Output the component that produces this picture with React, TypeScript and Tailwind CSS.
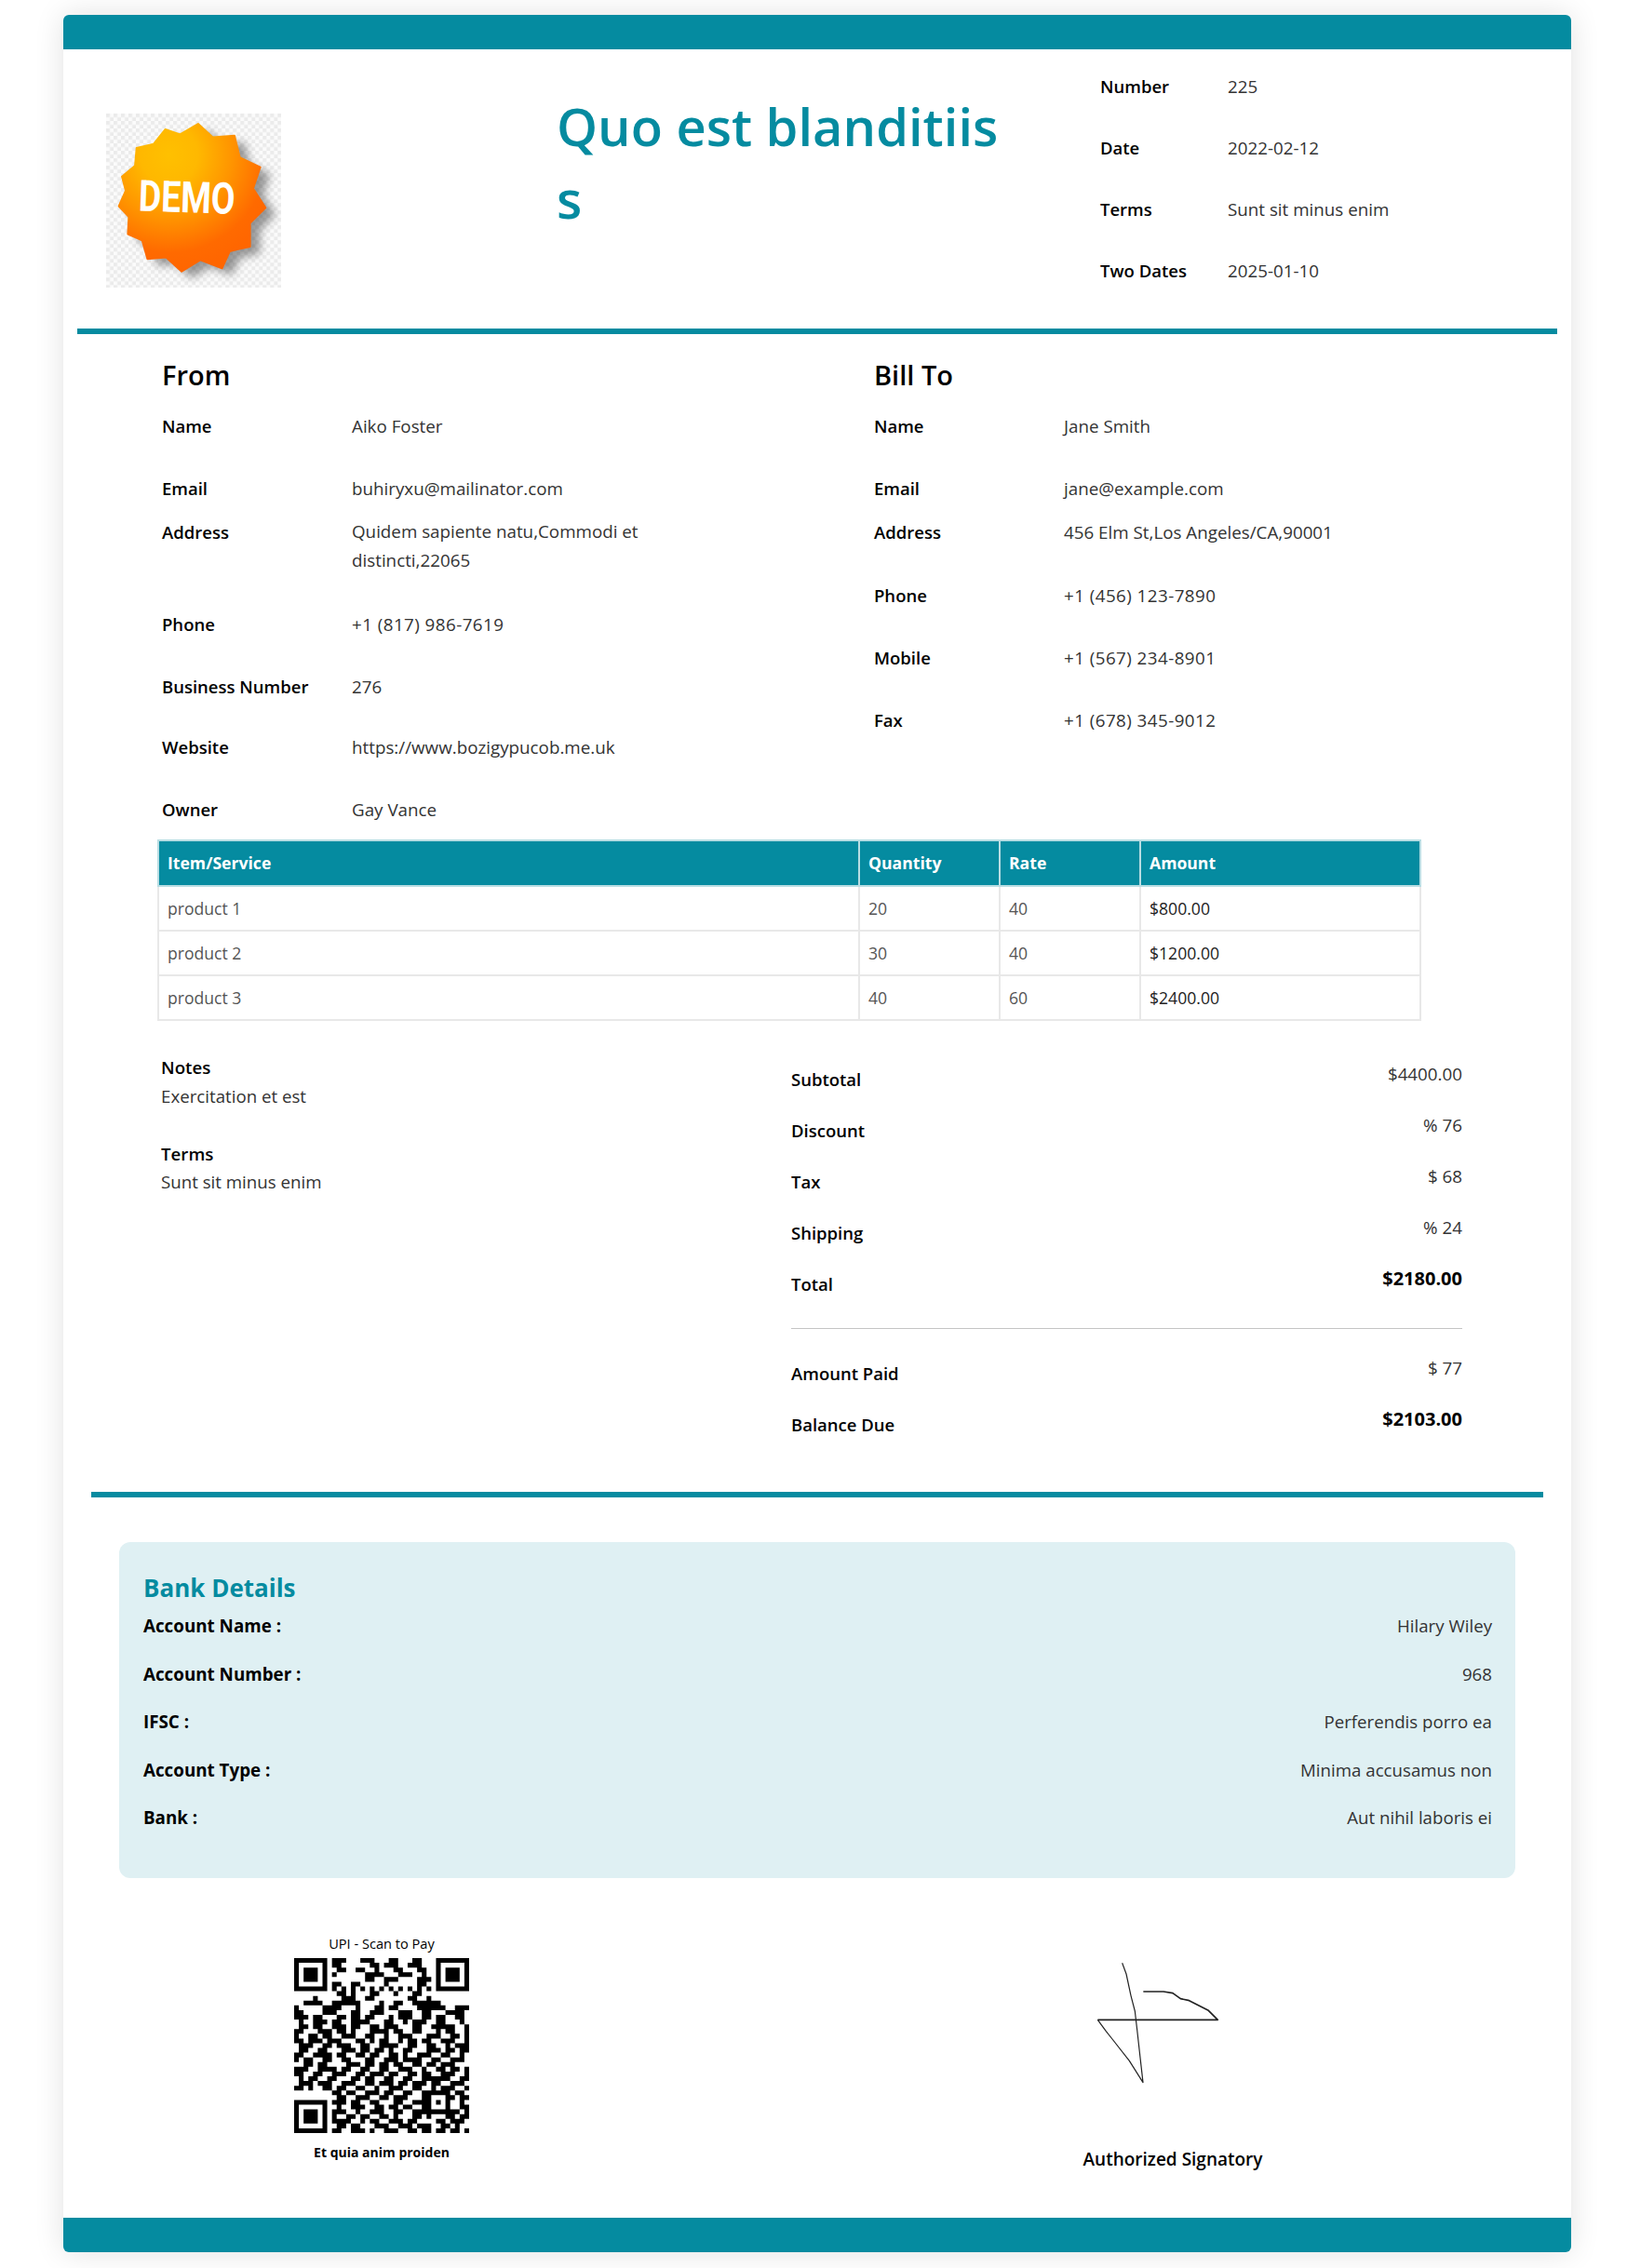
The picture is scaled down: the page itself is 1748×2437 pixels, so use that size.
import React from "react";

const QR_ROWS = [
  "1111111011100011100011000110011111111",
  "1000001011000000110111001110001000001",
  "1000001001100110010001100011011011101",
  "1011101010000001111000111001001011101",
  "1011101000000001100111000011111011101",
  "1000001011001100000100000011001000001",
  "1111111010101010101010101010101111111",
  "0000000001101000110001000110000000000",
  "0000100000111001100000001100100000000",
  "0011110011111100001001100111111000000",
  "1000001111000100011011000011111100111",
  "1100001110001100111000111001100011110",
  "1110110001101101100010111001101100110",
  "0100111011001111000110010111001100010",
  "0110110011101100110111000110011111001",
  "1100011101101000111101100110001011001",
  "1001101100111001100100111000111001101",
  "1101110111000110101100101101100111001",
  "0111001101110011001111001100110010111",
  "0110011000111011011010011000111011011",
  "1100111101100110110011010011100110010",
  "1011001100110001100111011110011001110",
  "0011011000011101101101100110110111000",
  "1110011110110011001100111001001101101",
  "1100110011100110111011001101100111001",
  "0101100110001101100110011001111110011",
  "0111011100111001101110110111011001110",
  "1101001101100110010011100110010111001",
  "0000000011011001110110011001111110110",
  "0000000001100111001101110001000111011",
  "0000000011101100110001100111010110010",
  "0000000001001110011011011001000110011",
  "0000000011100100111001100111111101101",
  "0000000010011011001101000110100011011",
  "0000000011110010110011101100001101110",
  "0000000001101100011100111011100110100",
  "0000000011001110100111001101101101101",
];

function qrCells() {
  const n = 37;
  const g = QR_ROWS.map((r) => r.padEnd(n, "0").slice(0, n).split("").map((c) => c === "1"));
  const finder = (ox: number, oy: number) => {
    for (let y = -1; y <= 7; y++)
      for (let x = -1; x <= 7; x++) {
        const px = ox + x, py = oy + y;
        if (px < 0 || py < 0 || px >= n || py >= n) continue;
        const ring = x === 0 || x === 6 || y === 0 || y === 6;
        const core = x >= 2 && x <= 4 && y >= 2 && y <= 4;
        g[py][px] = x >= 0 && x <= 6 && y >= 0 && y <= 6 && (ring || core);
      }
  };
  finder(0, 0);
  finder(30, 0);
  finder(0, 30);
  for (let y = 0; y < 5; y++)
    for (let x = 0; x < 5; x++) {
      g[28 + y][28 + x] = x === 0 || x === 4 || y === 0 || y === 4 || (x === 2 && y === 2);
    }
  const cells: [number, number][] = [];
  g.forEach((r, y) => r.forEach((v, x) => { if (v) cells.push([x, y]); }));
  return cells;
}

function QrCode() {
  return (
    <svg width="188" height="188" viewBox="0 0 37 37" className="block">
      <path d={qrCells().map(([x, y]) => `M${x} ${y}h1v1h-1z`).join("")} fill="#000" />
    </svg>
  );
}

function DemoLogo() {
  const star = "232,88 280,104 338,70 385,113 455,108 472,178 538,210 515,278 555,340 505,390 505,465 440,480 415,535 345,508 285,545 235,500 175,505 158,445 112,425 115,370 83,335 105,285 93,240 135,205 140,148 195,135";
  return (
    <svg width="188" height="187" viewBox="42 37 563 560" className="block">
      <defs>
        <pattern id="chk" width="24" height="24" patternUnits="userSpaceOnUse" x="42" y="37">
          <rect width="24" height="24" fill="#fbfbfb" />
          <rect width="12" height="12" fill="#ebebeb" />
          <rect x="12" y="12" width="12" height="12" fill="#ebebeb" />
        </pattern>
        <radialGradient id="orng" gradientUnits="userSpaceOnUse" cx="245" cy="170" r="370">
          <stop offset="0" stopColor="#ffc000" />
          <stop offset="0.25" stopColor="#ffb800" />
          <stop offset="0.55" stopColor="#ff9400" />
          <stop offset="0.85" stopColor="#ff6a00" />
          <stop offset="1" stopColor="#ff6600" />
        </radialGradient>
        <filter id="shd" x="-20%" y="-20%" width="140%" height="140%">
          <feGaussianBlur stdDeviation="15" />
        </filter>
      </defs>
      <rect x="42" y="37" width="563" height="560" fill="url(#chk)" />
      <polygon points={star} fill="#000" opacity="0.38" filter="url(#shd)" transform="translate(32 22)" />
      <polygon points={star} fill="url(#orng)" stroke="url(#orng)" strokeWidth="6" strokeLinejoin="round" />
      <text
        x="147"
        y="355"
        transform="rotate(2 300 308)"
        textLength="310"
        lengthAdjust="spacingAndGlyphs"
        fontFamily="Roboto, sans-serif"
        fontWeight="700"
        fontSize="140"
        fill="#fff"
      >
        DEMO
      </text>
    </svg>
  );
}

function Signature() {
  return (
    <svg width="140" height="140" viewBox="165 75 420 420" className="block">
      <path
        d="M257 85 L270 120 L285 190 L298 240 L305 300 L315 390 L324 470 L280 400 L225 330 L205 305 L178 268"
        fill="none"
        stroke="#222"
        strokeWidth="3.6"
        strokeLinejoin="round"
      />
      <path
        d="M178 268 L565 268 L535 238 L470 205 L445 200 L420 182 L390 177 L325 177"
        fill="none"
        stroke="#222"
        strokeWidth="5"
        strokeLinejoin="round"
      />
    </svg>
  );
}

function MetaRow({ k, v }: { k: string; v: string }) {
  return (
    <div className="flex h-[66px] items-center">
      <div className="w-[137px] text-[18.5px] font-semibold text-black">{k}</div>
      <div className="text-[18.8px] text-[#333]">{v}</div>
    </div>
  );
}

function PartyRow({ k, children, h }: { k: string; children: React.ReactNode; h: string }) {
  return (
    <div className={`flex leading-[24px] ${h}`}>
      <div className="w-[204px] shrink-0 text-[18.5px] font-semibold text-black">{k}</div>
      <div className="text-[18.8px] text-[#333]">{children}</div>
    </div>
  );
}

function Phone({ children }: { children: React.ReactNode }) {
  return <span className="tracking-[0.45px]">{children}</span>;
}

function TotalRow({ k, v, bold }: { k: string; v: string; bold?: boolean }) {
  return (
    <div className="flex h-[55px] justify-between leading-[24px]">
      <div className="pt-[6px] text-[18.5px] font-semibold text-black">{k}</div>
      <div className={bold ? "text-[20px] font-bold text-black" : "text-[18.8px] text-[#333]"}>{v}</div>
    </div>
  );
}

function BankRow({ k, v }: { k: string; v: string }) {
  return (
    <div className="flex h-[51.5px] justify-between leading-[24px]">
      <div className="text-[18.8px] font-bold text-black">{k}</div>
      <div className="text-[18.7px] text-[#333]">{v}</div>
    </div>
  );
}

const ITEMS = [
  ["product 1", "20", "40", "$800.00"],
  ["product 2", "30", "40", "$1200.00"],
  ["product 3", "40", "60", "$2400.00"],
];

export default function App() {
  return (
    <div className="bg-white pb-[17px] pt-[16px] font-['Open_Sans',sans-serif]">
      <div className="ml-[68px] w-[1620px] rounded-[6px] bg-white shadow-[0_0_32px_rgba(0,0,0,0.12)]">
        <div className="h-[37px] rounded-t-[6px] bg-[#058ba0]" />

        <div className="flex h-[300px]">
          <div className="w-[530px] pl-[46px] pt-[69px]">
            <DemoLogo />
          </div>
          <div className="w-[584px] pt-[43px] text-[56px] font-semibold leading-[78px] text-[#058ba0]">
            Quo est blanditiis
            <br />s
          </div>
          <div className="pt-[7px]">
            <MetaRow k="Number" v="225" />
            <MetaRow k="Date" v="2022-02-12" />
            <MetaRow k="Terms" v="Sunt sit minus enim" />
            <MetaRow k="Two Dates" v="2025-01-10" />
          </div>
        </div>

        <div className="mx-[15px] h-[6px] bg-[#058ba0]" />

        <div className="flex h-[543px] pl-[106px] pt-[22px]">
          <div className="w-[765px]">
            <h2 className="mb-[21px] h-[44px] text-[29px] font-semibold leading-[44px] text-black">From</h2>
            <PartyRow k="Name" h="h-[67px]">Aiko Foster</PartyRow>
            <PartyRow k="Email" h="h-[47px]">buhiryxu@mailinator.com</PartyRow>
            <PartyRow k="Address" h="h-[99px]">
              <div className="-mt-[4px] w-[340px] leading-[31px]">Quidem sapiente natu,Commodi et distincti,22065</div>
            </PartyRow>
            <PartyRow k="Phone" h="h-[67px]"><Phone>+1 (817) 986-7619</Phone></PartyRow>
            <PartyRow k="Business Number" h="h-[65px]">276</PartyRow>
            <PartyRow k="Website" h="h-[67px]">https://www.bozigypucob.me.uk</PartyRow>
            <PartyRow k="Owner" h="h-[24px]">Gay Vance</PartyRow>
          </div>
          <div>
            <h2 className="mb-[21px] h-[44px] text-[29px] font-semibold leading-[44px] text-black">Bill To</h2>
            <PartyRow k="Name" h="h-[67px]">Jane Smith</PartyRow>
            <PartyRow k="Email" h="h-[47px]">jane@example.com</PartyRow>
            <PartyRow k="Address" h="h-[68px]">456 Elm St,Los Angeles/CA,90001</PartyRow>
            <PartyRow k="Phone" h="h-[67px]"><Phone>+1 (456) 123-7890</Phone></PartyRow>
            <PartyRow k="Mobile" h="h-[67px]"><Phone>+1 (567) 234-8901</Phone></PartyRow>
            <PartyRow k="Fax" h="h-[24px]"><Phone>+1 (678) 345-9012</Phone></PartyRow>
          </div>
        </div>

        <div className="pl-[101px]">
          <table className="w-[1356px] table-fixed border-collapse text-[17.6px]">
            <colgroup>
              <col className="w-[753px]" />
              <col className="w-[151px]" />
              <col className="w-[151px]" />
              <col className="w-[301px]" />
            </colgroup>
            <thead>
              <tr className="h-[49px] bg-[#058ba0] text-left text-white">
                {["Item/Service", "Quantity", "Rate", "Amount"].map((h) => (
                  <th key={h} className="border-2 border-[#b8dde3] px-[9px] font-bold">{h}</th>
                ))}
              </tr>
            </thead>
            <tbody>
              {ITEMS.map((r) => (
                <tr key={r[0]} className="h-[48px]">
                  <td className="border-2 border-[#e8e8e8] px-[9px] text-[#555]">{r[0]}</td>
                  <td className="border-2 border-[#e8e8e8] px-[9px] text-[#555]">{r[1]}</td>
                  <td className="border-2 border-[#e8e8e8] px-[9px] text-[#555]">{r[2]}</td>
                  <td className="border-2 border-[#e8e8e8] px-[9px] text-[#222]">{r[3]}</td>
                </tr>
              ))}
            </tbody>
          </table>
        </div>

        <div className="flex h-[506px] pl-[105px] pt-[38px]">
          <div className="w-[677px]">
            <div className="text-[18.7px] font-semibold leading-[24px] text-black">Notes</div>
            <div className="mt-[7px] text-[18.7px] leading-[24px] text-[#333]">Exercitation et est</div>
            <div className="mt-[38px] text-[18.7px] font-semibold leading-[24px] text-black">Terms</div>
            <div className="mt-[6px] text-[18.7px] leading-[24px] text-[#333]">Sunt sit minus enim</div>
          </div>
          <div className="w-[721px] pt-[7px]">
            <TotalRow k="Subtotal" v="$4400.00" />
            <TotalRow k="Discount" v="% 76" />
            <TotalRow k="Tax" v="$ 68" />
            <TotalRow k="Shipping" v="% 24" />
            <TotalRow k="Total" v="$2180.00" bold />
            <div className="mb-[30px] mt-[10px] h-px bg-[#c4c4c4]" />
            <TotalRow k="Amount Paid" v="$ 77" />
            <TotalRow k="Balance Due" v="$2103.00" bold />
          </div>
        </div>

        <div className="mx-[30px] h-[6px] bg-[#058ba0]" />

        <div className="mx-[60px] mt-[48px] h-[361px] rounded-[12px] bg-[#dff0f3] pl-[26px] pr-[25px] pt-[31px]">
          <h3 className="mb-[11px] h-[36px] text-[26px] font-bold leading-[36px] text-[#058ba0]">Bank Details</h3>
          <BankRow k="Account Name :" v="Hilary Wiley" />
          <BankRow k="Account Number :" v="968" />
          <BankRow k="IFSC :" v="Perferendis porro ea" />
          <BankRow k="Account Type :" v="Minima accusamus non" />
          <BankRow k="Bank :" v="Aut nihil laboris ei" />
        </div>

        <div className="flex h-[365px] pt-[61px]">
          <div className="flex w-[684px] flex-col items-center">
            <div className="text-[14.6px] leading-[18px] text-black">UPI - Scan to Pay</div>
            <div className="mt-[7px]">
              <QrCode />
            </div>
            <div className="mt-[11px] text-[14px] font-bold leading-[20px] text-black">Et quia anim proiden</div>
          </div>
          <div className="flex w-[936px] flex-col items-center pl-[80px]">
            <div className="mt-[27px] h-[140px] w-[140px] -translate-x-[15px]">
              <Signature />
            </div>
            <div className="mt-[62px] text-[19px] font-semibold leading-[24px] text-black">Authorized Signatory</div>
          </div>
        </div>

        <div className="h-[37px] rounded-b-[6px] bg-[#058ba0]" />
      </div>
    </div>
  );
}
